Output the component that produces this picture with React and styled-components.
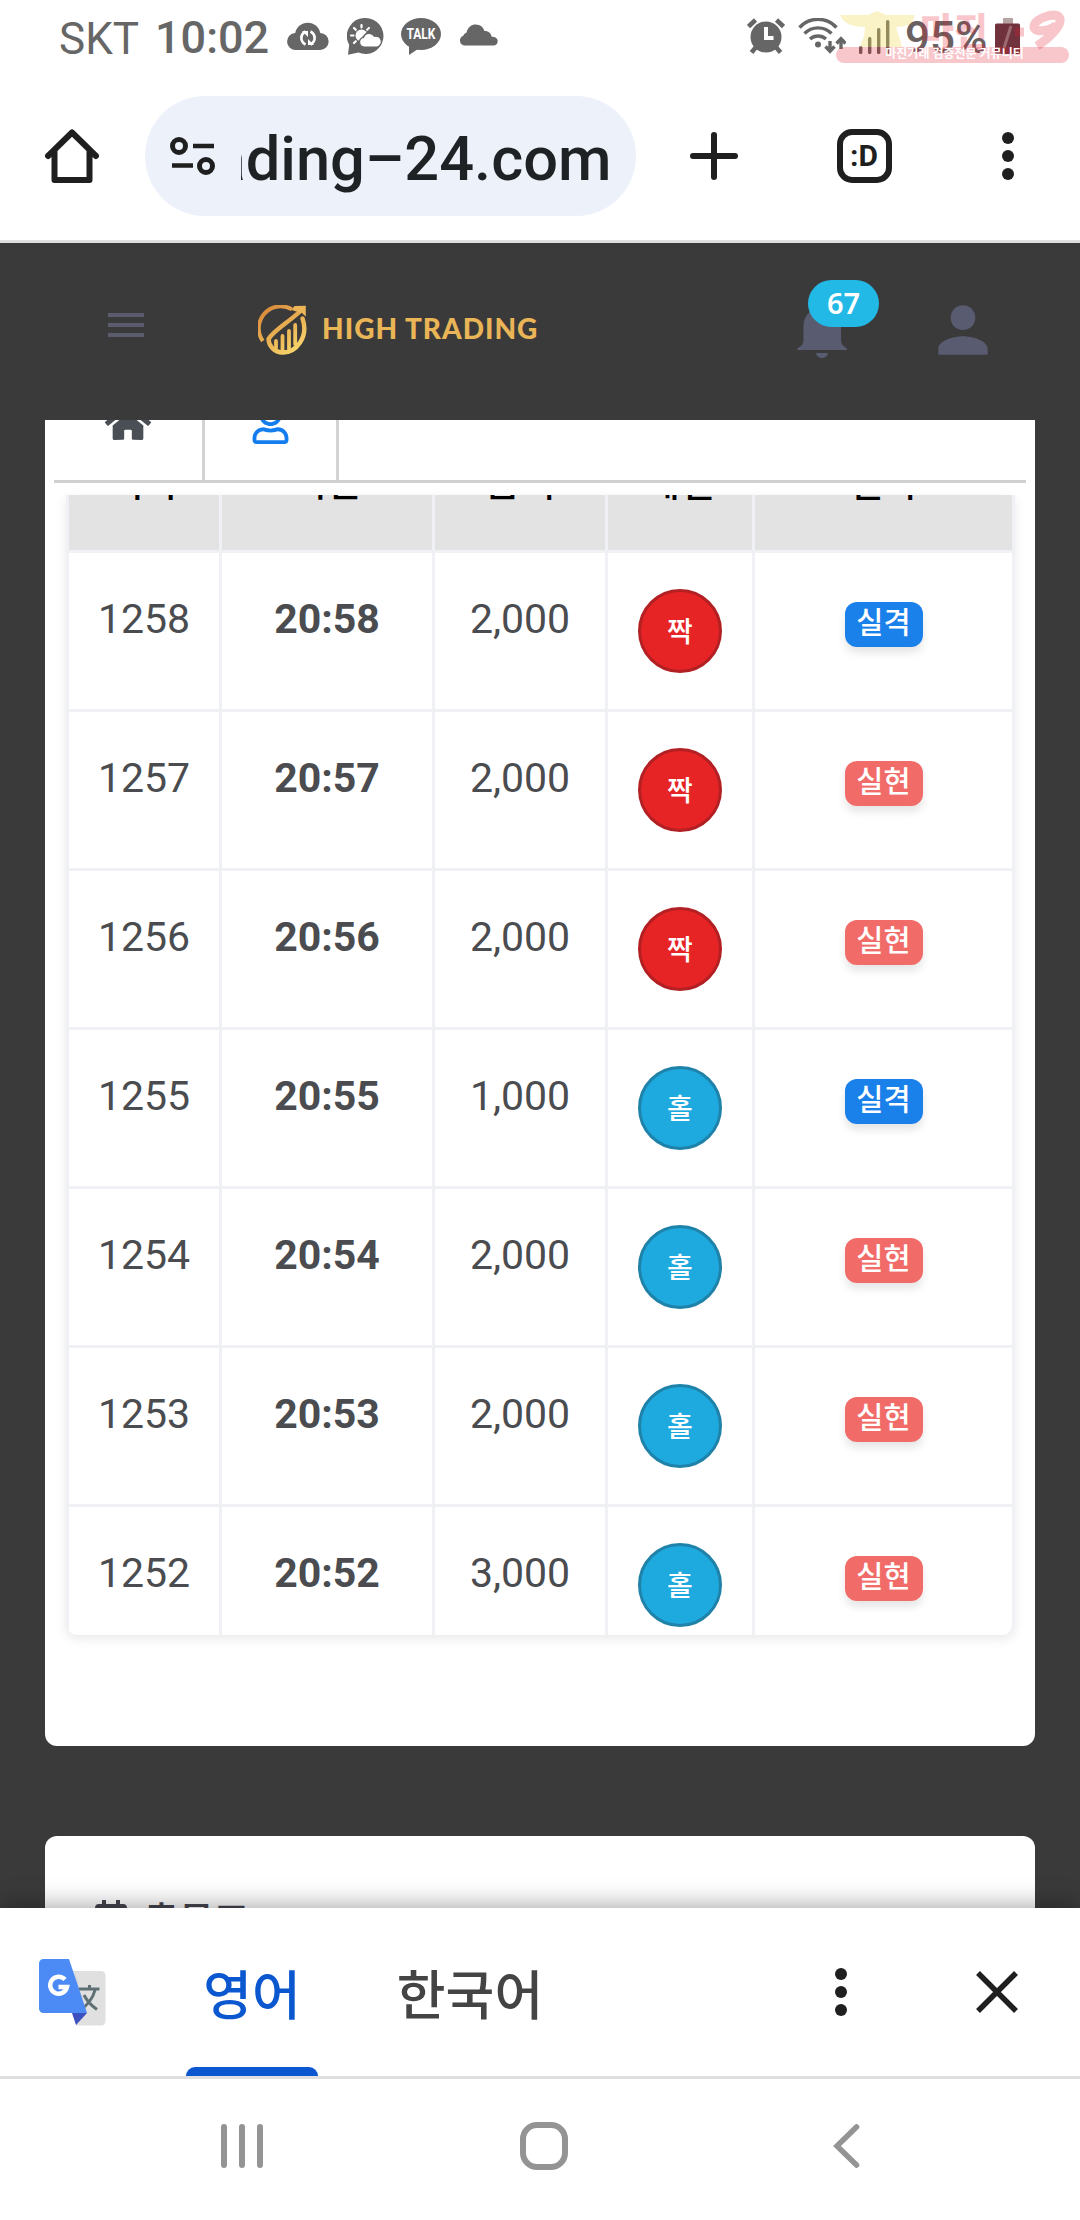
import React from 'react';
import styled, { createGlobalStyle } from 'styled-components';
import { FaHome, FaRegUser } from 'react-icons/fa';
import { MdPerson } from 'react-icons/md';

const rows = [
  { round: '1258', time: '20:58', amount: '2,000', pick: '짝', result: '실격' },
  { round: '1257', time: '20:57', amount: '2,000', pick: '짝', result: '실현' },
  { round: '1256', time: '20:56', amount: '2,000', pick: '짝', result: '실현' },
  { round: '1255', time: '20:55', amount: '1,000', pick: '홀', result: '실격' },
  { round: '1254', time: '20:54', amount: '2,000', pick: '홀', result: '실현' },
  { round: '1253', time: '20:53', amount: '2,000', pick: '홀', result: '실현' },
  { round: '1252', time: '20:52', amount: '3,000', pick: '홀', result: '실현' },
];

const headings = ['회차', '시간', '금액', '체결', '결과'];

function StatusIcons() {
  return (
    <>
      <Icon width="42" height="40" viewBox="0 0 42 40" fill="#666">
        <path d="M9 32a8.500 8.500 0 0 1-.8-17C9.500 9 14.500 4.800 20.800 4.800S32 9 33.300 15A8.500 8.500 0 0 1 33 32z" />
        <g fill="none" stroke="#fff" strokeWidth="2.600">
          <path d="M18.500 13.500c-5.500 3-5.500 10 0 13" />
          <path d="M23.500 13.500c5.500 3 5.500 10 0 13" />
        </g>
        <path fill="#fff" d="M15 13h6v6zM27 27h-6v-6z" />
      </Icon>
      <Icon $ml={18} width="37" height="40" viewBox="0 0 37 40" fill="#666">
        <path d="M18.500 0a18 18 0 1 1-7 34.600L1 36.800l1.200-10A18 18 0 0 1 18.500 0z" />
        <circle cx="14.500" cy="17.500" r="6" fill="#fff" />
        <g stroke="#fff" strokeWidth="2.200" strokeLinecap="round">
          <path d="M14.500 7v2.500M7 10l1.800 1.800M4 17.500h2.500M7 25l1.800-1.800M22 10l-1.800 1.800" />
        </g>
        <path d="M9 27L24 11" stroke="#666" strokeWidth="2" />
        <path
          fill="#fff"
          stroke="#666"
          strokeWidth="1.200"
          d="M17 29a4.800 4.800 0 0 1-.5-9.500 6 6 0 0 1 10.800-1.200 5.500 5.500 0 0 1 3 10.700z"
        />
      </Icon>
      <Icon $ml={17} width="40" height="40" viewBox="0 0 40 40" fill="#666">
        <ellipse cx="20" cy="16" rx="20" ry="16" />
        <path d="M8 28v9l9-6z" />
        <text
          x="20"
          y="21"
          fill="#fff"
          fontFamily="Roboto, sans-serif"
          fontWeight="700"
          fontSize="14"
          textAnchor="middle"
          textLength="29"
          lengthAdjust="spacingAndGlyphs"
        >
          TALK
        </text>
      </Icon>
      <Icon $ml={18} width="39" height="40" viewBox="0 0 39 40" fill="#666">
        <path d="M5 27.500a5 5 0 0 1-1-9.500 6 6 0 0 1 3.500-3.600C9 9 12.500 6.500 16.500 6.500c4.800 0 7.800 2.800 9 6.500 3.500-.2 6.500 2 7 5.500 3.500.3 6.200 1.500 6.200 4.700 0 2.500-1.700 4.300-4.200 4.300z" />
      </Icon>
    </>
  );
}

function SignalIcons() {
  return (
    <>
      <Icon width="38" height="40" viewBox="0 0 38 40" fill="#666">
        <circle cx="19" cy="19" r="15.500" />
        <path
          stroke="#666"
          strokeWidth="4.600"
          d="M1.500 8.500l7-6.500M36.500 8.500l-7-6.500M4.500 34.500l5-6M33.500 34.500l-5-6"
        />
        <path fill="none" stroke="#fff" strokeWidth="4" d="M19 9v11h7.500" />
      </Icon>
      <Icon $ml={13} width="48" height="40" viewBox="0 0 48 40">
        <g fill="none" stroke="#666" strokeWidth="3.400">
          <path d="M1.500 9.500a25 25 0 0 1 37 0" />
          <path d="M6.500 15.500a19 19 0 0 1 27 0" />
          <path d="M12 21a12 12 0 0 1 16 0" />
          <path d="M32 23v10M43 31V21" />
          <path d="M27.500 28.500l4.500 4.700 4.500-4.700M38.500 25.500l4.500-4.700 4.500 4.700" />
        </g>
        <circle cx="20" cy="26.500" r="3" fill="#666" />
      </Icon>
      <Icon $ml={12} width="33" height="40" viewBox="0 0 33 40" fill="#66605c">
        <rect x="1" y="28" width="3.400" height="8" rx="1.500" />
        <rect x="10" y="19" width="3.400" height="17" rx="1.500" />
        <rect x="19" y="10" width="3.400" height="26" rx="1.500" />
        <rect x="28" y="2" width="3.400" height="34" rx="1.500" />
      </Icon>
    </>
  );
}

function Logo() {
  return (
    <svg width="49" height="50" viewBox="0 0 49 50">
      <defs>
        <linearGradient id="gold" gradientUnits="userSpaceOnUse" x1="4" y1="4" x2="36" y2="48">
          <stop offset="0" stopColor="#d9893a" />
          <stop offset="1" stopColor="#f8d46a" />
        </linearGradient>
      </defs>
      <g fill="none" stroke="url(#gold)" strokeLinecap="round">
        <path strokeWidth="4" strokeLinecap="butt" d="M4.800 36A22 22 0 0 1 34 4.400" />
        <path strokeWidth="4.400" d="M43 5.500C31 17 16 25 10.500 34a14 14 0 0 0 13 13.500C38 48.500 51 32 44.500 13.500" />
        <path strokeWidth="3.800" d="M18 36v7M24.500 31v14M31 26v18M37.200 20v19" />
      </g>
      <path fill="#eeb558" d="M47.800.8v11l-3.500-3.500L33.500 5l3-4z" />
    </svg>
  );
}

function TranslateLogo() {
  return (
    <TranslateIcon width="67" height="67" viewBox="0 0 67 67">
      <path fill="#e0e0e0" d="M34 12h28a4.500 4.500 0 0 1 4.500 4.500V62a4.500 4.500 0 0 1-4.500 4.500H37z" />
      <path fill="#c3c6c9" d="M36 14l12 40-11 12z" opacity=".5" />
      <g fill="none" stroke="#5f7074" strokeWidth="3">
        <path d="M40 30h20.500M50.500 26v4M56 31c-2 8-7 14-13 19M45 36c3 6 8 11 13 14.500" />
      </g>
      <path fill="#3d50c0" d="M33 54h15L37 66z" />
      <path fill="#4c8bf5" d="M4.500 0H30l18 54H4.500A4.500 4.500 0 0 1 0 49.500v-45A4.500 4.500 0 0 1 4.500 0z" />
      <path
        fill="none"
        stroke="#fff"
        strokeWidth="4.400"
        d="M26 20.500a8.500 8.500 0 1 0 2 7.500h-8.500"
      />
    </TranslateIcon>
  );
}

function Watermark() {
  return (
    <WatermarkBox>
      <svg width="236" height="40" viewBox="0 0 236 40">
        <path
          fill="rgba(236, 220, 90, .34)"
          d="M4 5h28l9-4 9 4h29c-2 9-9 12-19 12l3 9 3 11H24l4-11 1-9C15 17 7 13 4 5z"
        />
        <text
          x="84"
          y="35"
          fill="rgba(228, 30, 50, .26)"
          fontFamily="'Noto Sans CJK KR', sans-serif"
          fontWeight="900"
          fontSize="38"
          textLength="68"
          lengthAdjust="spacingAndGlyphs"
        >
          마진
        </text>
        <path
          fill="none"
          stroke="rgba(228, 30, 50, .26)"
          strokeWidth="9"
          d="M221 14c-3 6-22 10-23 3-1-8 20-15 25-10 5 6-8 20-22 29M179 22h9"
        />
      </svg>
      <WatermarkStrip>마진거래 검증전문 커뮤니티</WatermarkStrip>
    </WatermarkBox>
  );
}

function Dots() {
  return (
    <svg width="12" height="48" viewBox="0 0 12 48" fill="#1f1f1f">
      <circle cx="6" cy="6" r="6" />
      <circle cx="6" cy="24" r="6" />
      <circle cx="6" cy="42" r="6" />
    </svg>
  );
}

function HistoryTable() {
  return (
    <Table>
      <HeadRow>
        {headings.map((heading) => (
          <HeadCell key={heading}>
            <span>{heading}</span>
          </HeadCell>
        ))}
      </HeadRow>
      {rows.map((row) => (
        <Row key={row.round}>
          <Cell>{row.round}</Cell>
          <Cell $bold>{row.time}</Cell>
          <Cell>{row.amount}</Cell>
          <Cell>
            <Pick $odd={row.pick === '홀'}>{row.pick}</Pick>
          </Cell>
          <Cell>
            <Result $miss={row.result === '실격'}>{row.result}</Result>
          </Cell>
        </Row>
      ))}
    </Table>
  );
}

function App() {
  return (
    <Screen>
      <GlobalStyle />
      <StatusBar>
        <Carrier>SKT</Carrier>
        <Clock>10:02</Clock>
        <StatusIcons />
        <StatusRight>
          <SignalIcons />
          <Percent>95%</Percent>
          <Icon width="26" height="40" viewBox="0 0 26 40">
            <rect x="8" y="0" width="10" height="6" fill="#b5a3a4" />
            <rect x="0" y="5.500" width="25" height="30.500" rx="1.500" fill="#70323c" />
            <path d="M16 8L9 30" stroke="#9c6a70" strokeWidth="3" />
          </Icon>
        </StatusRight>
        <Watermark />
      </StatusBar>

      <BrowserBar>
        <svg width="54" height="54" viewBox="0 0 54 54" fill="none" stroke="#1f1f1f">
          <path
            strokeWidth="6"
            strokeLinecap="round"
            strokeLinejoin="round"
            d="M3 27L27 3.500 51 27M9.500 22v29h35V22"
          />
        </svg>
        <AddressPill>
          <svg width="46" height="40" viewBox="0 0 46 40" fill="none" stroke="#1f1f1f">
            <circle cx="9" cy="10" r="6.500" strokeWidth="5" />
            <circle cx="36" cy="30" r="6.500" strokeWidth="5" />
            <path strokeWidth="4.600" d="M23 10h21M2 29.500h21" />
          </svg>
          <Address>
            <span>trading–24.com</span>
          </Address>
        </AddressPill>
        <PlusIcon width="48" height="48" viewBox="0 0 48 48">
          <path stroke="#1f1f1f" strokeWidth="6" strokeLinecap="round" d="M24 3v42M3 24h42" />
        </PlusIcon>
        <TabCount>:D</TabCount>
        <Dots />
      </BrowserBar>

      <Page>
        <AppHeader>
          <MenuButton>
            <i />
            <i />
            <i />
          </MenuButton>
          <Brand>
            <Logo />
            <BrandName>HIGH TRADING</BrandName>
          </Brand>
          <BellButton>
            <svg width="50" height="52" viewBox="0 0 50 52" fill="#595c70">
              <path d="M0 44c0-2 2-2.500 4-4 2.500-2 2.500-5 2.500-9V20C6.500 9 14 2 25 2s19 7 19 18v11c0 4 0 7 2.500 9 2 1.500 3.500 2 3.500 4z" />
              <path d="M19 47h12c-.5 3.500-3 5-6 5s-5.500-1.500-6-5z" />
            </svg>
            <Count>67</Count>
          </BellButton>
          <MdPerson size={74} color="#595c70" />
        </AppHeader>

        <Card>
          <Tabs>
            <Tab>
              <FaHome size={46} color="#4a4f55" />
            </Tab>
            <Tab $active>
              <FaRegUser size={41} color="#147df0" />
            </Tab>
          </Tabs>
          <HistoryTable />
        </Card>

        <NextCard>
          <svg width="32" height="36" viewBox="0 0 32 36" fill="#45464f">
            <path d="M7 0h4v4h10V0h4v4h3a4 4 0 0 1 4 4v28H0V8a4 4 0 0 1 4-4h3z" />
          </svg>
          <NextTitle>출목표</NextTitle>
        </NextCard>
      </Page>

      <TranslateBar>
        <TranslateLogo />
        <Language $active>영어</Language>
        <Language>한국어</Language>
        <TranslateActions>
          <Dots />
          <svg width="44" height="44" viewBox="0 0 44 44">
            <path stroke="#1f1f1f" strokeWidth="5.500" d="M3 3l38 38M41 3L3 41" />
          </svg>
        </TranslateActions>
      </TranslateBar>

      <NavBar>
        <svg width="42" height="48" viewBox="0 0 42 48">
          <path
            stroke="#949494"
            strokeWidth="6"
            strokeLinecap="round"
            d="M3 5v38M21 5v38M39 5v38"
          />
        </svg>
        <HomeKey />
        <svg width="27" height="48" viewBox="0 0 27 48">
          <path
            fill="none"
            stroke="#949494"
            strokeWidth="5.500"
            strokeLinecap="round"
            d="M23.500 5L4 24l19.500 19"
          />
        </svg>
      </NavBar>
    </Screen>
  );
}

export default App;

const GlobalStyle = createGlobalStyle`
  * {
    box-sizing: border-box;
  }
  body {
    margin: 0;
    background: #fff;
    font-family: Roboto, 'Noto Sans CJK KR', sans-serif;
  }
  svg {
    display: block;
    flex-shrink: 0;
  }
`;

const Screen = styled.div`
  display: flex;
  flex-direction: column;
  width: 1080px;
  height: 2220px;
  overflow: hidden;
`;

const StatusBar = styled.div`
  position: relative;
  display: flex;
  align-items: center;
  height: 76px;
  padding: 0 59px 0 59px;
  font-size: 45px;
  line-height: 76px;
  color: #666;
  white-space: nowrap;
`;

const Carrier = styled.span`
  width: 96px;
  padding-top: 2px;
  font-size: 44px;
`;

const Clock = styled.span`
  width: 132px;
  font-weight: 500;
`;

const Icon = styled.svg`
  margin-left: ${(props) => props.$ml || 0}px;
`;

const StatusRight = styled.div`
  display: flex;
  align-items: center;
  margin-left: auto;
`;

const Percent = styled.span`
  width: 104px;
  padding-left: 14px;
  font-size: 44px;
  font-weight: 500;
  color: #69605f;
`;

const WatermarkBox = styled.div`
  position: absolute;
  top: 10px;
  left: 836px;
  width: 236px;
`;

const WatermarkStrip = styled.div`
  width: 233px;
  height: 16px;
  margin-top: -3px;
  padding-left: 4px;
  border-radius: 8px;
  background: rgba(228, 30, 50, 0.25);
  font-size: 12px;
  font-weight: 700;
  line-height: 15px;
  text-align: center;
  color: #fff;
`;

const BrowserBar = styled.div`
  display: flex;
  align-items: center;
  height: 167px;
  padding: 0 66px 4px 45px;
  border-bottom: 3px solid #dedede;
  justify-content: space-between;
`;

const AddressPill = styled.div`
  display: flex;
  align-items: center;
  width: 491px;
  height: 120px;
  margin-right: 9px;
  padding: 0 24px 0 25px;
  border-radius: 60px;
  background: #edf1fa;
`;

const Address = styled.div`
  display: flex;
  justify-content: flex-end;
  width: 371px;
  margin-left: 25px;
  padding-top: 5px;
  overflow: hidden;
  font-size: 61.4px;
  font-weight: 500;
  line-height: 84px;
  color: #1f2224;
  white-space: nowrap;
`;

const PlusIcon = styled.svg`
  margin-right: 53px;
`;

const TabCount = styled.div`
  width: 55px;
  height: 54px;
  margin-right: 65px;
  border: 6px solid #1f1f1f;
  border-radius: 15px;
  font-size: 30px;
  font-weight: 700;
  line-height: 42px;
  text-align: center;
  color: #1f1f1f;
`;

const Page = styled.main`
  height: 1665px;
  overflow: hidden;
  background: #3a3a3a;
`;

const AppHeader = styled.header`
  display: flex;
  align-items: center;
  height: 177px;
  padding: 0 80px 3px 108px;
`;

const MenuButton = styled.div`
  display: flex;
  flex-direction: column;
  gap: 6px;
  width: 36px;
  margin: 0 114px 10px 0;

  i {
    height: 4px;
    background: #5a5b6c;
  }
`;

const Brand = styled.div`
  display: flex;
  align-items: center;
  gap: 15px;
`;

const BrandName = styled.span`
  padding-bottom: 5px;
  font-family: Lato, sans-serif;
  font-size: 28px;
  font-weight: 900;
  letter-spacing: 1px;
  line-height: 40px;
  color: #e9b557;
  white-space: nowrap;
`;

const BellButton = styled.div`
  position: relative;
  margin: 3px 79px 0 auto;
`;

const Count = styled.span`
  position: absolute;
  top: -26px;
  left: 11px;
  width: 71px;
  height: 47px;
  border-radius: 24px;
  background: #22b9e6;
  font-family: 'Noto Sans', sans-serif;
  font-size: 29px;
  font-weight: 600;
  line-height: 45px;
  text-align: center;
  color: #fff;
`;

const Card = styled.section`
  width: 990px;
  height: 1326px;
  margin: 0 45px 90px;
  border-radius: 0 0 12px 12px;
  background: #fff;
`;

const Tabs = styled.div`
  display: flex;
  height: 63px;
  margin: 0 9px 12px;
  border-bottom: 3px solid #d0d0d0;
  overflow: hidden;
`;

const Tab = styled.div`
  display: flex;
  justify-content: center;
  width: ${(props) => (props.$active ? 134 : 151)}px;
  height: 60px;
  border-right: 3px solid #d3d3d3;

  svg {
    margin-top: ${(props) => (props.$active ? -17 : -21)}px;
  }
`;

const Table = styled.div`
  width: 949px;
  height: 1140px;
  margin-left: 21px;
  overflow: hidden;
  border-right: 3px solid #f0f1f4;
  border-radius: 0 0 12px 12px;
  box-shadow: 0 4px 12px rgba(0, 0, 0, 0.09);
`;

const Row = styled.div`
  display: grid;
  grid-template-columns: 153px 213px 173px 147px 260px;
  height: 159px;
  border-bottom: 3px solid #f0f1f4;
`;

const HeadRow = styled(Row)`
  height: 58px;
  background: #e3e3e4;
`;

const HeadCell = styled.div`
  height: 55px;
  overflow: hidden;
  border-left: 3px solid #f0f1f4;
  font-size: 38px;
  font-weight: 500;
  line-height: 60px;
  text-align: center;
  color: #000;

  span {
    display: block;
    margin-top: -42px;
  }
`;

const Cell = styled.div`
  display: flex;
  justify-content: center;
  align-items: flex-start;
  padding-top: 36px;
  border-left: 3px solid #f0f1f4;
  font-size: 41px;
  font-weight: ${(props) => (props.$bold ? 700 : 400)};
  line-height: 60px;
  color: #4a4c50;
`;

const Pick = styled.span`
  width: 84px;
  height: 84px;
  border: 3px solid ${(props) => (props.$odd ? '#1f82a8' : '#b22024')};
  border-radius: 50%;
  background: ${(props) => (props.$odd ? '#1ea9df' : '#e62426')};
  font-size: 28px;
  font-weight: 500;
  line-height: 82px;
  text-align: center;
  color: #fff;
`;

const Result = styled.span`
  width: 78px;
  height: 45px;
  margin-top: 13px;
  border-radius: 12px;
  background: ${(props) => (props.$miss ? '#1a80ea' : '#f16c69')};
  box-shadow: 0 6px 9px rgba(0, 0, 0, 0.1);
  font-size: 29.5px;
  font-weight: 500;
  line-height: 42px;
  text-align: center;
  color: #fff;
`;

const NextCard = styled.section`
  display: flex;
  align-items: flex-start;
  gap: 17px;
  width: 990px;
  height: 200px;
  margin: 0 45px;
  padding: 64px 50px 0;
  border-radius: 12px;
  background: #fff;
`;

const NextTitle = styled.h2`
  margin: -9px 0 0;
  font-size: 38px;
  font-weight: 500;
  line-height: 60px;
  color: #45464f;
`;

const TranslateBar = styled.div`
  position: relative;
  display: flex;
  height: 171px;
  padding: 0 61px 0 39px;
  border-bottom: 3px solid #dfdfdf;
  background: #fff;
  box-shadow: 0 0 26px rgba(0, 0, 0, 0.4);
`;

const TranslateIcon = styled.svg`
  margin: 51px 80px 0 0;
`;

const Language = styled.div`
  display: flex;
  flex-direction: column;
  align-items: center;
  width: ${(props) => (props.$active ? 132 : 304)}px;
  height: 168px;
  padding-top: 10px;
  font-size: 53px;
  font-weight: 500;
  line-height: 158px;
  color: ${(props) => (props.$active ? '#0b57d0' : '#444')};

  &::after {
    content: '';
    display: ${(props) => (props.$active ? 'block' : 'none')};
    flex: none;
    width: 132px;
    height: 9px;
    margin-top: -9px;
    border-radius: 9px 9px 0 0;
    background: #0b57d0;
  }
`;

const TranslateActions = styled.div`
  display: flex;
  align-items: center;
  gap: 128px;
  margin-left: auto;
`;

const NavBar = styled.nav`
  position: relative;
  display: flex;
  align-items: center;
  justify-content: space-between;
  height: 141px;
  padding: 0 220px 7px 221px;
  background: #fff;
`;

const HomeKey = styled.div`
  width: 48px;
  height: 48px;
  margin-left: -8px;
  border: 6px solid #949494;
  border-radius: 17px;
`;
